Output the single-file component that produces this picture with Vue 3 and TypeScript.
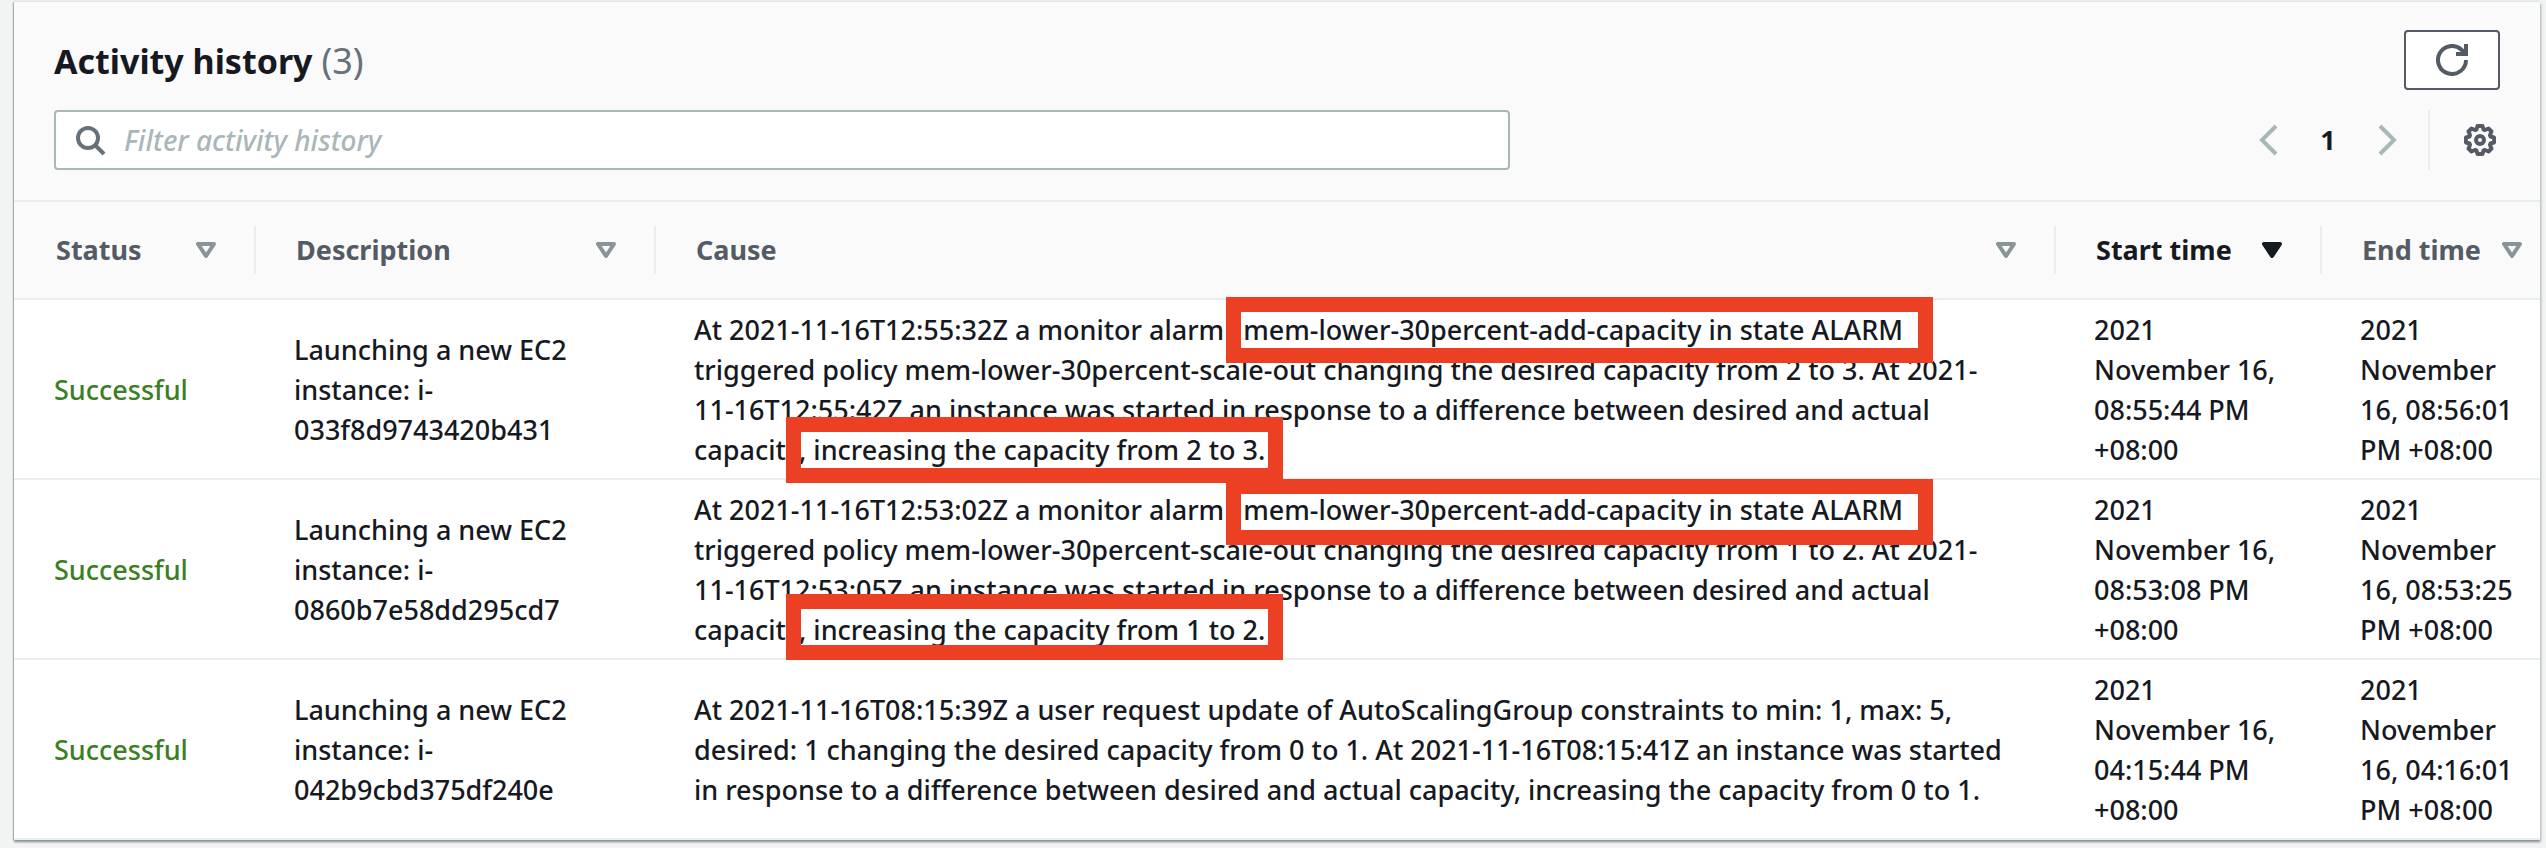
<script setup lang="ts">
import { ref } from 'vue'

interface Column {
  key: string
  label: string
  sorted?: boolean
}

interface Activity {
  id: string
  status: string
  description: string
  lead: string
  alarm: string
  cause: string
  start: string
  end: string
  marks: string[]
}

const columns: Column[] = [
  { key: 'status', label: 'Status' },
  { key: 'description', label: 'Description' },
  { key: 'cause', label: 'Cause' },
  { key: 'start', label: 'Start time', sorted: true },
  { key: 'end', label: 'End time' },
]

const activities: Activity[] = [
  {
    id: 'a1',
    status: 'Successful',
    description: 'Launching a new EC2\ninstance: i-\n033f8d9743420b431',
    lead: 'At 2021-11-16T12:55:32Z a monitor alarm ',
    alarm: 'mem-lower-30percent-add-capacity in state ALARM',
    cause:
      '\ntriggered policy mem-lower-30percent-scale-out changing the desired capacity from 2 to 3. At 2021-\n11-16T12:55:42Z an instance was started in response to a difference between desired and actual\ncapacity, increasing the capacity from 2 to 3.',
    start: '2021\nNovember 16,\n08:55:44 PM\n+08:00',
    end: '2021\nNovember\n16, 08:56:01\nPM +08:00',
    marks: ['alarm-first', 'growth-first'],
  },
  {
    id: 'a2',
    status: 'Successful',
    description: 'Launching a new EC2\ninstance: i-\n0860b7e58dd295cd7',
    lead: 'At 2021-11-16T12:53:02Z a monitor alarm ',
    alarm: 'mem-lower-30percent-add-capacity in state ALARM',
    cause:
      '\ntriggered policy mem-lower-30percent-scale-out changing the desired capacity from 1 to 2. At 2021-\n11-16T12:53:05Z an instance was started in response to a difference between desired and actual\ncapacity, increasing the capacity from 1 to 2.',
    start: '2021\nNovember 16,\n08:53:08 PM\n+08:00',
    end: '2021\nNovember\n16, 08:53:25\nPM +08:00',
    marks: ['alarm-second', 'growth-second'],
  },
  {
    id: 'a3',
    status: 'Successful',
    description: 'Launching a new EC2\ninstance: i-\n042b9cbd375df240e',
    lead: '',
    alarm: '',
    cause:
      'At 2021-11-16T08:15:39Z a user request update of AutoScalingGroup constraints to min: 1, max: 5,\ndesired: 1 changing the desired capacity from 0 to 1. At 2021-11-16T08:15:41Z an instance was started\nin response to a difference between desired and actual capacity, increasing the capacity from 0 to 1.',
    start: '2021\nNovember 16,\n04:15:44 PM\n+08:00',
    end: '2021\nNovember\n16, 04:16:01\nPM +08:00',
    marks: [],
  },
]

const filter = ref('')
</script>

<template>
  <main class="page">
    <section class="panel">
      <header class="panel-head">
        <div class="title-row">
          <h2 class="title">Activity history <span class="count">({{ activities.length }})</span></h2>
          <button class="refresh" type="button" aria-label="Refresh">
            <svg viewBox="0 0 32 32" width="32" height="32" fill="none" stroke="currentColor" stroke-width="4">
              <path d="M30 16a14 14 0 1 1-4.500-10.300L30 10" />
              <path d="M30 0v10H20" />
            </svg>
          </button>
        </div>
        <div class="tools-row">
          <label class="search">
            <svg viewBox="0 0 32 32" width="32" height="32" fill="none" stroke="currentColor" stroke-width="4">
              <circle cx="12" cy="14" r="10" />
              <path d="M19 21l9 9" />
            </svg>
            <input v-model="filter" type="text" placeholder="Filter activity history" aria-label="Filter activity history" />
          </label>
          <nav class="pager" aria-label="Pages">
            <button class="icon-button faded" type="button" aria-label="Previous page">
              <svg viewBox="0 0 32 32" width="32" height="32" fill="none" stroke="currentColor" stroke-width="4">
                <path d="M23 2L9 16l14 14" />
              </svg>
            </button>
            <button class="page-number" type="button">1</button>
            <button class="icon-button faded" type="button" aria-label="Next page">
              <svg viewBox="0 0 32 32" width="32" height="32" fill="none" stroke="currentColor" stroke-width="4">
                <path d="M9 2l14 14L9 30" />
              </svg>
            </button>
            <span class="rule"></span>
            <button class="icon-button" type="button" aria-label="Preferences">
              <svg viewBox="0 0 32 32" width="32" height="32" fill="none" stroke="currentColor" stroke-width="4" stroke-linejoin="round">
                <path d="M13.500 2h5l1 3.500L21 6l3.500-1.500 3 3L26 11l.500 1.500L30 13.500v5l-3.500 1L26 21l1.500 3.500-3 3L21 26l-1.500.500-1 3.500h-5l-1-3.500L11 26l-3.500 1.500-3-3L6 21l-.500-1.500L2 18.500v-5l3.500-1L6 11 4.500 7.500l3-3L11 6l1.500-.500z" />
                <circle cx="16" cy="16" r="4" />
              </svg>
            </button>
          </nav>
        </div>
      </header>
      <table class="grid">
        <colgroup>
          <col v-for="c in columns" :key="c.key" :class="'col-' + c.key" />
        </colgroup>
        <thead>
          <tr>
            <th v-for="c in columns" :key="c.key" scope="col">
              <button class="sort" :class="{ active: c.sorted }" type="button">
                <span>{{ c.label }}</span>
                <svg viewBox="0 0 20 16" width="20" height="16" stroke="currentColor" stroke-width="4" stroke-linejoin="round">
                  <path d="M2 2h16l-8 12z" :fill="c.sorted ? 'currentColor' : 'none'" />
                </svg>
              </button>
            </th>
          </tr>
        </thead>
        <tbody>
          <tr v-for="a in activities" :key="a.id">
            <td class="status">{{ a.status }}</td>
            <td>{{ a.description }}</td>
            <td class="cause">{{ a.lead }}<span v-if="a.alarm" class="alarm">{{ a.alarm }}</span>{{ a.cause }}<span v-for="m in a.marks" :key="m" class="mark" :class="m"></span></td>
            <td>{{ a.start }}</td>
            <td>{{ a.end }}</td>
          </tr>
        </tbody>
      </table>
    </section>
  </main>
</template>

<style>
body {
  background: #f2f3f3;
}
</style>

<style scoped>
.page {
  box-sizing: border-box;
  padding: 2px 6px 8px 14px;
  background: #f2f3f3;
  color: #16191f;
  font-family: "Noto Sans", "Open Sans", sans-serif;
  font-size: 27px;
  font-weight: 500;
  line-height: 40px;
}
.panel {
  background: #fff;
  box-shadow: 0 2px 2px #879196, 2px 2px 2px #d5dbdb, -1px 0 1px #b5bbbf, 0 -2px 0 #eaeded;
}
.panel-head {
  padding: 28px 40px 30px;
  background: #fafafa;
  border-bottom: 2px solid #eaeded;
}
.title-row,
.tools-row {
  display: flex;
  justify-content: space-between;
  align-items: center;
}
.tools-row {
  margin-top: 20px;
}
.title {
  margin: 0;
  padding-top: 2px;
  font-size: 34px;
  line-height: 44px;
  font-weight: 700;
}
.count {
  color: #687078;
  font-size: 36px;
  font-weight: 400;
}
button {
  padding: 0;
  border: 0;
  background: none;
  color: #545b64;
  font: inherit;
  cursor: pointer;
}
svg {
  display: block;
  flex: none;
}
.refresh {
  display: flex;
  justify-content: center;
  align-items: center;
  box-sizing: border-box;
  width: 96px;
  height: 60px;
  border: 2px solid #545b64;
  border-radius: 4px;
  background: #fff;
}
.search {
  display: flex;
  align-items: center;
  gap: 16px;
  flex: 0 1 1456px;
  box-sizing: border-box;
  height: 60px;
  padding: 0 20px;
  border: 2px solid #aab7b8;
  border-radius: 4px;
  background: #fff;
  color: #687078;
}
.search input {
  flex: 1;
  min-width: 0;
  padding: 2px 0 0;
  border: 0;
  outline: 0;
  background: none;
  color: #16191f;
  font: inherit;
}
.search input::placeholder {
  color: #aab7b8;
  font-size: 28px;
  font-style: italic;
  opacity: 1;
}
.pager {
  display: flex;
  align-items: center;
  padding-right: 4px;
}
.faded {
  color: #aab7b8;
}
.page-number {
  width: 86px;
  color: #16191f;
  font-weight: 700;
}
.rule {
  width: 2px;
  height: 60px;
  margin: 0 34px 0 25px;
  background: #eaeded;
}
.grid {
  width: 100%;
  border-collapse: separate;
  border-spacing: 0;
  table-layout: fixed;
}
.col-status {
  width: 242px;
}
.col-description {
  width: 400px;
}
.col-start {
  width: 266px;
}
.col-end {
  width: 218px;
}
th {
  padding: 24px 0;
  background: #fafafa;
  border-bottom: 2px solid #eaeded;
  text-align: left;
}
.sort {
  display: flex;
  justify-content: space-between;
  align-items: center;
  box-sizing: border-box;
  width: 100%;
  height: 48px;
  padding: 0 38px 0 40px;
  border-right: 2px solid #eaeded;
  font-weight: 700;
}
.sort svg {
  color: #879596;
}
.sort.active,
.sort.active svg {
  color: #16191f;
}
th:last-child .sort {
  padding-right: 18px;
  border-right: 0;
}
td {
  padding: 10px 0 8px 38px;
  border-bottom: 2px solid #eaeded;
  vertical-align: middle;
  white-space: pre;
}
.status {
  color: #3b7f22;
}
th:first-child .sort {
  padding-left: 42px;
}
td:first-child {
  padding-left: 40px;
}
.cause {
  position: relative;
}
.alarm {
  padding: 0 12px;
}
.mark {
  position: absolute;
  box-sizing: border-box;
  height: 66px;
  border: 15px solid #ec4024;
  z-index: 1;
}
.alarm-first,
.alarm-second {
  left: 570px;
  width: 707px;
}
.growth-first,
.growth-second {
  left: 130px;
  width: 497px;
}
.alarm-first {
  top: -3px;
}
.alarm-second {
  top: -1px;
}
.growth-first {
  top: 117px;
}
.growth-second {
  top: 114px;
}
</style>
